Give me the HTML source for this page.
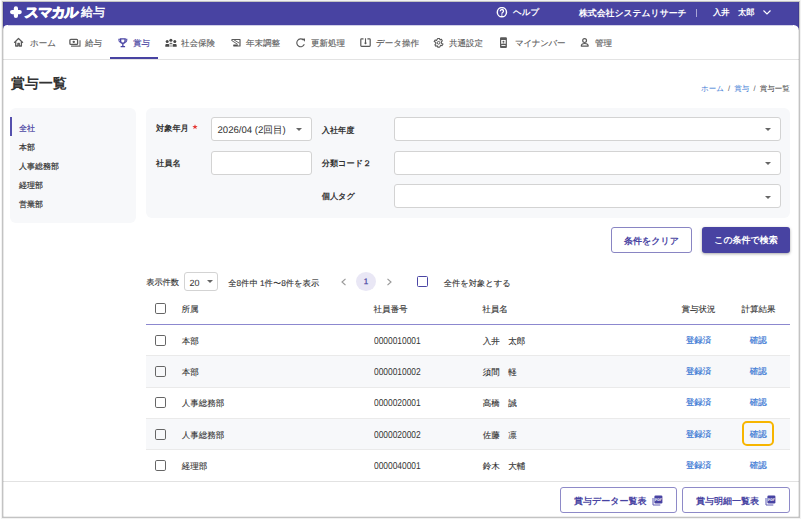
<!DOCTYPE html>
<html lang="ja"><head><meta charset="utf-8">
<style>
*{box-sizing:border-box;margin:0;padding:0}
html,body{width:802px;height:520px;overflow:hidden;background:#fff;font-family:"Liberation Sans",sans-serif;color:#333;text-rendering:geometricPrecision}
.a{position:absolute;white-space:nowrap}
#frame{position:absolute;left:2px;top:1px;width:798px;height:517px;border:1px solid #c3c3c3;background:#fff}
#hdr{position:absolute;left:3px;top:2px;width:796px;height:28px;background:#4843a2}
#panel{position:absolute;left:3px;top:25px;width:796px;height:491px;background:#fff;border-radius:4.5px 5.5px 0 0}
.hd{color:#fff;font-size:9px;line-height:10px}
.nt{font-size:8.5px;line-height:10px;color:#5f5f5f;top:37.7px;-webkit-text-stroke:.15px currentColor}
.ni{position:absolute;top:37px}
.card{position:absolute;background:#f7f8fa;border-radius:6px}
.lbl{font-size:8.2px;line-height:10px;color:#333;font-weight:bold}
.sel{position:absolute;background:#fff;border:1px solid #d3d3d3;border-radius:3px}
.caret{position:absolute;width:0;height:0;border-left:3px solid transparent;border-right:3px solid transparent;border-top:3px solid #666}
.side{font-size:8px;line-height:10px;color:#333;left:19px;-webkit-text-stroke:.2px currentColor}
.btn{position:absolute;border-radius:3px;font-size:9px;line-height:10px;font-weight:bold;text-align:center}
.t{font-size:8.5px;line-height:10px;color:#333;-webkit-text-stroke:.12px currentColor}
.th{font-size:8.5px;line-height:10px;color:#333;-webkit-text-stroke:.1px currentColor}
.num{font-size:10px;line-height:10px;color:#333;transform:scaleX(.84);transform-origin:0 0}
.lnk{font-size:8.5px;line-height:10px;color:#3a78d4;-webkit-text-stroke:.2px currentColor}
.cb{position:absolute;width:10.8px;height:10.6px;border:1.6px solid #666;border-radius:1.8px}
.row{position:absolute;left:146px;width:644px;height:31.3px;border-bottom:1px solid #eaeaea}
</style></head><body>
<div id="frame"></div>
<div id="hdr"></div>
<!-- header content -->
<svg class="a" style="left:8px;top:4px" width="16" height="16" viewBox="8 4 16 16"><path d="M12.1 12.1H19.7M15.9 8.3V15.9" stroke="#fff" stroke-width="4.2" stroke-linecap="round"/></svg>
<div class="a hd" style="left:24.5px;top:4px;font-size:14px;line-height:16px;font-weight:700;letter-spacing:-1.15px;-webkit-text-stroke:.9px #fff;transform:skewX(-5deg)">スマカル</div>
<div class="a hd" style="left:81px;top:4px;font-size:12px;line-height:16px;-webkit-text-stroke:.45px #fff">給与</div>
<svg class="a" style="left:496px;top:7px" width="12" height="12" viewBox="0 0 12 12"><circle cx="5.9" cy="5.2" r="4.6" fill="none" stroke="#fff" stroke-width="1.45"/><path d="M4.3 4.2a1.6 1.6 0 1 1 2.4 1.3c-.5.3-.8.6-.8 1.2" fill="none" stroke="#fff" stroke-width="1.35"/><circle cx="5.9" cy="8" r=".75" fill="#fff"/></svg>
<div class="a hd" style="left:513px;top:7px;font-weight:bold;font-size:8.5px">ヘルプ</div>
<div class="a hd" style="left:579px;top:7.5px;font-weight:bold;font-size:8.85px">株式会社システムリサーチ</div>
<div class="a" style="left:695.5px;top:9px;width:1px;height:7.5px;background:#a9a5d6"></div>
<div class="a hd" style="left:713px;top:7px;font-weight:bold;font-size:8.3px">入井　太郎</div>
<svg class="a" style="left:762px;top:9px" width="10" height="7" viewBox="0 0 10 7"><path d="M1.5 1.5 5 5 8.5 1.5" fill="none" stroke="#fff" stroke-width="1.15"/></svg>

<div id="panel"></div>
<div class="a" style="left:8px;top:25px;width:785px;height:1px;background:rgba(72,67,162,.25)"></div>

<!-- nav -->
<svg class="a" style="left:10px;top:34px" width="20" height="16" viewBox="10 34 20 16"><path d="M14.5 42.4 18.5 38.5 22.6 42.4" fill="none" stroke="#5a5a5a" stroke-width="1.3" stroke-linejoin="round" stroke-linecap="round"/><path d="M15.7 41.3V46H17.9V43.4H19.3V46H21.4V41.3" fill="none" stroke="#5a5a5a" stroke-width="1.3" stroke-linejoin="round"/></svg>
<div class="a nt" style="left:30px">ホーム</div>
<svg class="a" style="left:66px;top:34px" width="20" height="16" viewBox="66 34 20 16"><rect x="69.9" y="39.3" width="7.7" height="5.1" rx=".9" fill="none" stroke="#5a5a5a" stroke-width="1.3"/><circle cx="73.75" cy="41.85" r="1.2" fill="#555"/><path d="M80 40.2V46.1H71" fill="none" stroke="#6a6a6a" stroke-width="1.15"/></svg>
<div class="a nt" style="left:85px">給与</div>
<svg class="a" style="left:113px;top:34px" width="20" height="16" viewBox="113 34 20 16"><path d="M120.6 38.9H125.1V41C125.1 42.4 124.2 43.2 122.85 43.2S120.6 42.4 120.6 41Z" fill="none" stroke="#4843a2" stroke-width="1.35"/><path d="M120 39.3H118.9V40.3C118.9 41.4 119.7 42.2 120.9 42.5M125.7 39.3H126.8V40.3C126.8 41.4 126 42.2 124.8 42.5" fill="none" stroke="#5a55b0" stroke-width="1.1"/><path d="M122.85 43.6V46.2" stroke="#4843a2" stroke-width="1.3"/><rect x="120.6" y="46" width="4.5" height="1.3" rx=".3" fill="#4843a2"/></svg>
<div class="a nt" style="left:133px;color:#4843a2">賞与</div>
<div class="a" style="left:110px;top:57.3px;width:48px;height:1.7px;background:#4843a2"></div>
<svg class="a" style="left:161px;top:34px" width="20" height="16" viewBox="161 34 20 16"><circle cx="170.9" cy="40.2" r="1.55" fill="#4a4a4a"/><circle cx="167.2" cy="41.5" r="1.5" fill="#4a4a4a"/><circle cx="174.8" cy="41.5" r="1.5" fill="#4a4a4a"/><path d="M165.3 46.7V45.2C165.3 44.4 165.9 43.9 166.6 43.9H168.1C168.8 43.9 169.3 44.4 169.3 45.2V46.7ZM172.7 46.7V45.2C172.7 44.4 173.2 43.9 173.9 43.9H175.4C176.1 43.9 176.7 44.4 176.7 45.2V46.7Z" fill="#4a4a4a"/><path d="M169.2 44.3C169.5 43.3 170.1 42.8 170.9 42.8S172.3 43.3 172.7 44.3Z" fill="#666"/><path d="M169.6 46.7H172.4V45.3H169.6Z" fill="#aaa"/></svg>
<div class="a nt" style="left:181px">社会保険</div>
<svg class="a" style="left:226px;top:34px" width="20" height="16" viewBox="226 34 20 16"><path d="M231.4 40.3 232.7 39.5H240V46H237.5" fill="none" stroke="#5a5a5a" stroke-width="1.2" stroke-linejoin="round"/><path d="M231.5 40.4 237.6 44.3M233.6 39.6 239.2 43.1" stroke="#666" stroke-width="1"/><rect x="233.2" y="44.5" width="4.6" height="1.9" rx=".4" fill="#505050"/></svg>
<div class="a nt" style="left:246px">年末調整</div>
<svg class="a" style="left:291px;top:34px" width="20" height="16" viewBox="291 34 20 16"><path d="M304.3 44.3A3.9 3.9 0 1 1 303.4 40" fill="none" stroke="#5a5a5a" stroke-width="1.15"/><path d="M302.1 38.8 305 38.6 304.9 41.7Z" fill="#555"/></svg>
<div class="a nt" style="left:311px">更新処理</div>
<svg class="a" style="left:355px;top:34px" width="20" height="16" viewBox="355 34 20 16"><path d="M363.5 38.8H361.6C361.1 38.8 360.8 39.1 360.8 39.6V45.6C360.8 46.1 361.1 46.4 361.6 46.4H369.4C369.9 46.4 370.2 46.1 370.2 45.6V39.6C370.2 39.1 369.9 38.8 369.4 38.8H367.4" fill="none" stroke="#5a5a5a" stroke-width="1.2"/><path d="M365.5 38.3V43.8" stroke="#5a5a5a" stroke-width="1.1"/><path d="M364 42.7H367L365.5 44.6Z" fill="#555"/></svg>
<div class="a nt" style="left:376px">データ操作</div>
<svg class="a" style="left:428px;top:34px" width="20" height="16" viewBox="428 34 20 16"><path d="M437.7 38.5H439.5L440 39.9 441.4 39.3 442.3 40.8 441.3 41.9 441.6 43.4 443 44 442.1 45.6 440.7 45.2 440 46.6 439.5 47.1H437.7L437.2 45.7 435.8 46.3 434.9 44.8 435.9 43.7 435.6 42.2 434.2 41.6 435.1 40 436.5 40.4Z" fill="none" stroke="#5a5a5a" stroke-width="1.1" stroke-linejoin="round"/><circle cx="438.6" cy="42.8" r="1.35" fill="none" stroke="#5a5a5a" stroke-width="1"/></svg>
<div class="a nt" style="left:449px">共通設定</div>
<svg class="a" style="left:494px;top:34px" width="20" height="16" viewBox="494 34 20 16"><rect x="500" y="37.2" width="6.9" height="10.8" rx="1" fill="#5a5a5a"/><rect x="501.2" y="40" width="4.5" height="3.8" fill="#fff"/><circle cx="503.45" cy="41.7" r="1" fill="#5a5a5a"/><path d="M502.1 43.8C502.4 42.9 504.5 42.9 504.8 43.8Z" fill="#5a5a5a"/><rect x="501.4" y="45" width="4.1" height=".9" fill="#fff"/></svg>
<div class="a nt" style="left:515px;letter-spacing:-.3px">マイナンバー</div>
<svg class="a" style="left:575px;top:34px" width="20" height="16" viewBox="575 34 20 16"><circle cx="584.6" cy="40.6" r="1.9" fill="none" stroke="#5a5a5a" stroke-width="1.2"/><path d="M581.3 46.1C581.3 44.4 583 43.5 584.7 43.5S588.2 44.4 588.2 46.1Z" fill="none" stroke="#5a5a5a" stroke-width="1.2" stroke-linejoin="round"/></svg>
<div class="a nt" style="left:595px">管理</div>
<div class="a" style="left:3px;top:59px;width:796px;height:1px;background:#e3e3e3"></div>

<!-- title -->
<div class="a" style="left:10.7px;top:75.2px;font-size:14px;line-height:16px;font-weight:bold;color:#333">賞与一覧</div>
<div class="a" style="left:701px;top:84px;font-size:7.5px;line-height:9px;color:#3a78d4">ホーム <span style="color:#555">&nbsp;/&nbsp;</span> 賞与 <span style="color:#555">&nbsp;/&nbsp;</span> <span style="color:#333">賞与一覧</span></div>

<!-- sidebar -->
<div class="card" style="left:10px;top:107.5px;width:126px;height:115.5px"></div>
<div class="a" style="left:10px;top:117px;width:1.6px;height:19.2px;background:#5550ad"></div>
<div class="a side" style="top:123.55px;color:#4843a2">全社</div>
<div class="a side" style="top:142.55px">本部</div>
<div class="a side" style="top:161.55px">人事総務部</div>
<div class="a side" style="top:180.55px">経理部</div>
<div class="a side" style="top:199.55px">営業部</div>

<!-- search card -->
<div class="card" style="left:146px;top:107.5px;width:644px;height:110.5px"></div>
<div class="a lbl" style="left:156px;top:124px">対象年月</div><svg class="a" style="left:192px;top:124px" width="6" height="6" viewBox="0 0 6 6"><path d="M3 .2 3.7 2.1 5.7 2.1 4.1 3.3 4.7 5.3 3 4.1 1.3 5.3 1.9 3.3 .3 2.1 2.3 2.1Z" fill="#e53935"/></svg>
<div class="sel" style="left:211px;top:117px;width:101px;height:24px"></div>
<div class="a" style="left:217.5px;top:124.6px;font-size:9.6px;line-height:11px;color:#333">2026/04 (2回目)</div>
<div class="caret" style="left:296px;top:128px"></div>
<div class="a lbl" style="left:156px;top:159px">社員名</div>
<div class="sel" style="left:211px;top:151px;width:101px;height:24px"></div>
<div class="a lbl" style="left:321.7px;top:126px">入社年度</div>
<div class="sel" style="left:394px;top:117px;width:387px;height:24px"></div>
<div class="caret" style="left:765px;top:128px"></div>
<div class="a lbl" style="left:321.7px;top:159px">分類コード２</div>
<div class="sel" style="left:394px;top:151px;width:387px;height:24px"></div>
<div class="caret" style="left:765px;top:162px"></div>
<div class="a lbl" style="left:321.7px;top:192px">個人タグ</div>
<div class="sel" style="left:394px;top:184px;width:387px;height:24px"></div>
<div class="caret" style="left:765px;top:196px"></div>

<!-- buttons -->
<div class="btn" style="left:611px;top:227px;width:81px;height:26px;border:1px solid #8985c3;color:#4843a2;padding-top:8px">条件をクリア</div>
<div class="btn" style="left:702px;top:227px;width:88px;height:26px;background:#4843a2;color:#fff;padding-top:8px;box-shadow:0 1px 3px rgba(0,0,0,.35)">この条件で検索</div>

<!-- pagination -->
<div class="a t" style="left:146.2px;top:277.6px;font-size:8.2px">表示件数</div>
<div class="sel" style="left:184px;top:272px;width:34px;height:19px"></div>
<div class="a" style="left:189.5px;top:278.2px;font-size:9px;line-height:10px;color:#333">20</div>
<div class="caret" style="left:207px;top:280px"></div>
<div class="a t" style="left:228.2px;top:277.6px;font-size:8.3px">全8件中 1件〜8件を表示</div>
<svg class="a" style="left:340px;top:278px" width="7" height="8" viewBox="0 0 7 8"><path d="M5.5 .8 2 4l3.5 3.2" fill="none" stroke="#999" stroke-width="1.15"/></svg>
<div class="a" style="left:356px;top:272px;width:20px;height:19px;border-radius:50%;background:#e9e7f5;color:#4843a2;font-size:8px;line-height:19px;text-align:center;-webkit-text-stroke:.25px currentColor">1</div>
<svg class="a" style="left:386px;top:278px" width="7" height="8" viewBox="0 0 7 8"><path d="M1.5 .8 5 4 1.5 7.2" fill="none" stroke="#999" stroke-width="1.15"/></svg>
<div class="cb" style="left:416.5px;top:276px;width:11px;height:11px;border:1.5px solid #4b46a5;border-radius:1.5px"></div>
<div class="a t" style="left:443.7px;top:277.6px;font-size:8.3px">全件を対象とする</div>

<!-- table -->
<div class="cb" style="left:155px;top:303px"></div>
<div class="a th" style="left:181.5px;top:304.3px">所属</div>
<div class="a th" style="left:373.5px;top:304.3px">社員番号</div>
<div class="a th" style="left:482.3px;top:304.3px">社員名</div>
<div class="a th" style="left:681.5px;top:304px">賞与状況</div>
<div class="a th" style="left:741.5px;top:304px">計算結果</div>
<div class="a" style="left:146px;top:324px;width:644px;height:1px;background:#8c88cf"></div>

<div class="row" style="top:325px"></div>
<div class="row" style="top:356.3px;background:#f7f8fa"></div>
<div class="row" style="top:387.6px"></div>
<div class="row" style="top:418.9px;background:#f7f8fa"></div>
<div class="row" style="top:450.2px;border-bottom:0"></div>

<div class="cb" style="left:155px;top:335px"></div>
<div class="a t" style="left:181.8px;top:335.5px">本部</div>
<div class="a num" style="left:373.5px;top:337.2px">0000010001</div>
<div class="a t" style="left:482.8px;top:335.5px">入井　太郎</div>
<div class="a lnk" style="left:685.8px;top:335.3px">登録済</div>
<div class="a lnk" style="left:749.8px;top:335.3px">確認</div>

<div class="cb" style="left:155px;top:366px"></div>
<div class="a t" style="left:181.8px;top:366.5px">本部</div>
<div class="a num" style="left:373.5px;top:368.2px">0000010002</div>
<div class="a t" style="left:482.8px;top:366.5px">須間　軽</div>
<div class="a lnk" style="left:685.8px;top:366.3px">登録済</div>
<div class="a lnk" style="left:749.8px;top:366.3px">確認</div>

<div class="cb" style="left:155px;top:397px"></div>
<div class="a t" style="left:181.8px;top:397.5px">人事総務部</div>
<div class="a num" style="left:373.5px;top:399.2px">0000020001</div>
<div class="a t" style="left:482.8px;top:397.5px">髙橋　誠</div>
<div class="a lnk" style="left:685.8px;top:397.3px">登録済</div>
<div class="a lnk" style="left:749.8px;top:397.3px">確認</div>

<div class="cb" style="left:155px;top:429px"></div>
<div class="a t" style="left:181.8px;top:429.5px">人事総務部</div>
<div class="a num" style="left:373.5px;top:431.2px">0000020002</div>
<div class="a t" style="left:482.8px;top:429.5px">佐藤　凛</div>
<div class="a lnk" style="left:685.8px;top:429.3px">登録済</div>
<div class="a" style="left:742px;top:421px;width:32px;height:25px;border:2px solid #f7b500;border-radius:5px"></div>
<div class="a lnk" style="left:749.8px;top:429.3px">確認</div>

<div class="cb" style="left:155px;top:460px"></div>
<div class="a t" style="left:181.8px;top:460.5px">経理部</div>
<div class="a num" style="left:373.5px;top:462.2px">0000040001</div>
<div class="a t" style="left:482.8px;top:460.5px">鈴木　大輔</div>
<div class="a lnk" style="left:685.8px;top:460.3px">登録済</div>
<div class="a lnk" style="left:749.8px;top:460.3px">確認</div>

<!-- footer -->
<div class="a" style="left:3px;top:481px;width:796px;height:35px;background:#fff;border-top:1px solid #e2e2e2"></div>
<div class="btn" style="left:560px;top:487px;width:117px;height:26px;border:1px solid #8e8ac8;color:#4843a2;padding-top:8px;text-align:left;padding-left:13px">賞与データー覧表</div>
<svg class="a" style="left:652px;top:495px" width="11" height="11" viewBox="0 0 11 11"><path d="M1 3v7H8.3" fill="none" stroke="#5f5ab3" stroke-width="1"/><rect x="2.4" y="0.6" width="8" height="7.9" rx="1.2" fill="#4843a2"/><text x="6.4" y="6" text-anchor="middle" font-family="Liberation Sans" font-weight="bold" font-size="3.6" fill="#fff">PDF</text></svg>
<div class="btn" style="left:682px;top:487px;width:108px;height:26px;border:1px solid #8e8ac8;color:#4843a2;padding-top:8px;text-align:left;padding-left:13px">賞与明細一覧表</div>
<svg class="a" style="left:765px;top:495px" width="11" height="11" viewBox="0 0 11 11"><path d="M1 3v7H8.3" fill="none" stroke="#5f5ab3" stroke-width="1"/><rect x="2.4" y="0.6" width="8" height="7.9" rx="1.2" fill="#4843a2"/><text x="6.4" y="6" text-anchor="middle" font-family="Liberation Sans" font-weight="bold" font-size="3.6" fill="#fff">PDF</text></svg>
<div class="a" style="left:3px;top:2px;width:796px;height:515px;box-shadow:inset 1px 0 0 rgba(0,0,0,.09),inset -1px 0 0 rgba(0,0,0,.09),inset 0 -1px 0 rgba(0,0,0,.07)"></div>
<div class="a" style="left:1px;top:0;width:800px;height:519px;border:1px solid rgba(0,0,0,.05)"></div>
</body></html>
